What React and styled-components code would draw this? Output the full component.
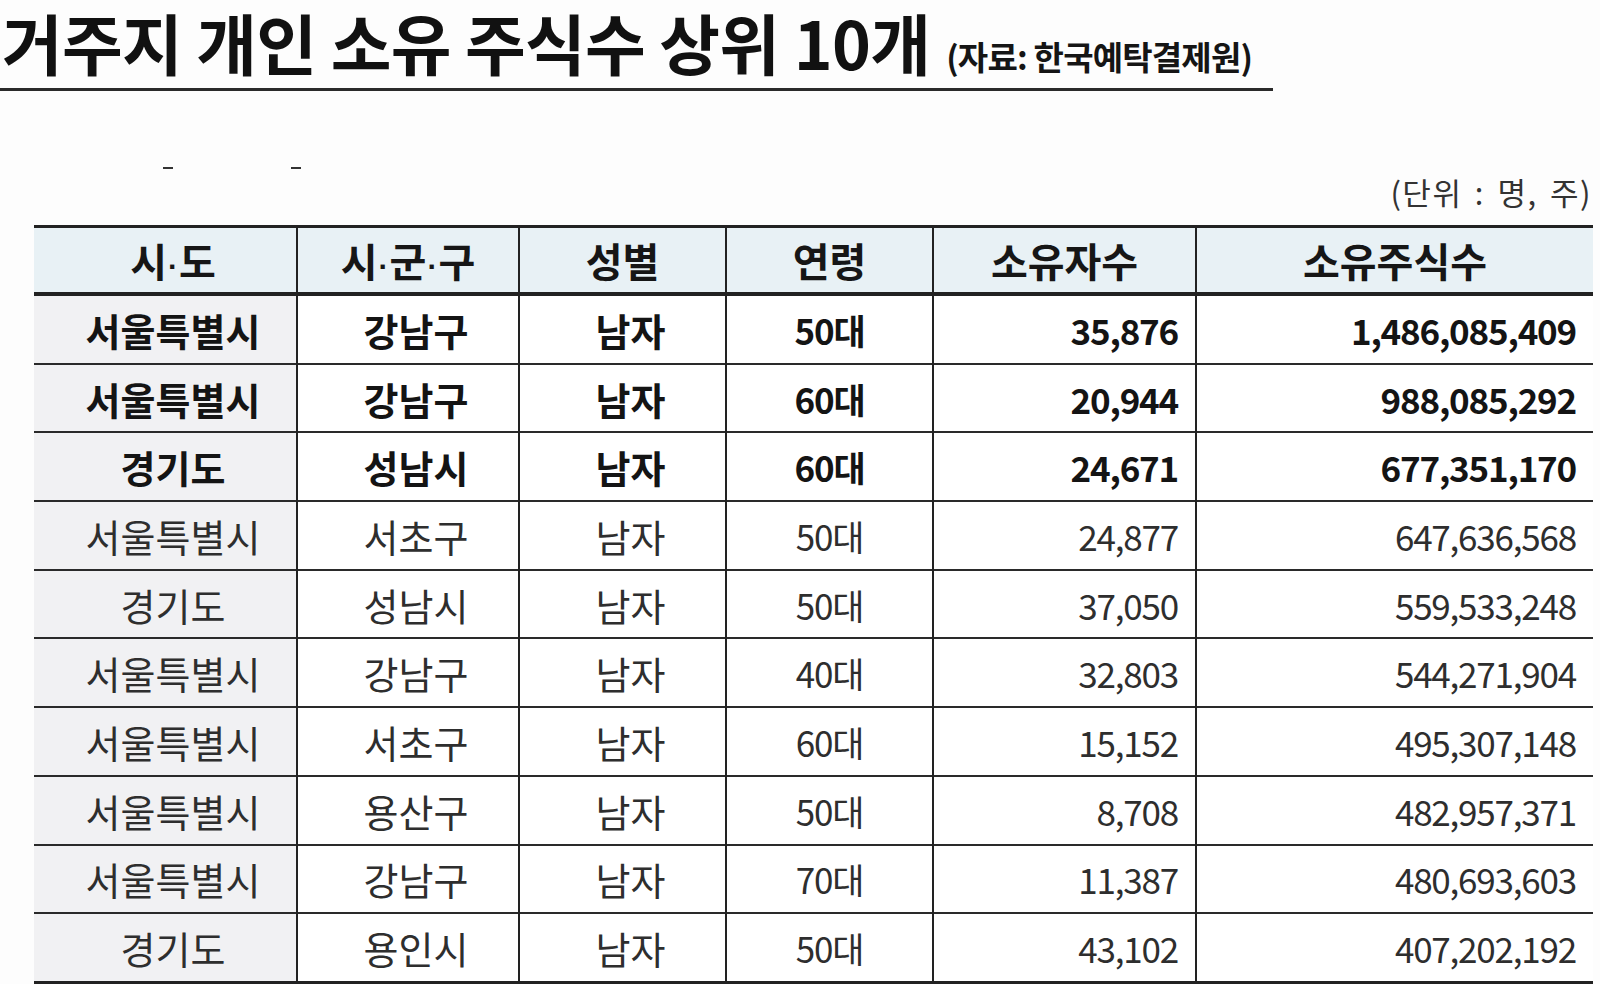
import React from 'react'
import styled, { createGlobalStyle } from 'styled-components'

const GlobalStyle = createGlobalStyle`
  html, body {
    margin: 0;
    padding: 0;
    background: #fdfdfd;
  }
  body {
    font-family: "Noto Sans CJK KR", "Noto Sans", sans-serif;
    color: #1b1b1b;
  }
`

const Page = styled.div`
  width: 1600px;
  height: 984px;
  overflow: hidden;
`

const TitleBar = styled.div`
  width: 1273px;
  height: 88px;
  border-bottom: 3px solid #2a2a2a;
  display: flex;
  align-items: flex-end;
`

const Title = styled.h1`
  margin: 0 0 7px 2px;
  font-size: 66px;
  font-weight: 700;
  letter-spacing: -0.7px;
  line-height: 80px;
  white-space: nowrap;
  color: #111;
`

const Source = styled.span`
  margin: 0 0 9px 16px;
  font-size: 33px;
  font-weight: 700;
  letter-spacing: -0.8px;
  line-height: 46px;
  white-space: nowrap;
  color: #151515;
`

const DashRow = styled.div`
  display: flex;
  gap: 118px;
  padding: 76px 0 0 163px;
`

const Dash = styled.span`
  width: 10px;
  height: 2px;
  background: #333;
`

const Unit = styled.div`
  text-align: right;
  padding-right: 8px;
  margin-top: 5px;
  font-size: 31px;
  font-weight: 400;
  line-height: 36px;
  color: #333;
  letter-spacing: 1.5px;
  word-spacing: 4px;
`

const Table = styled.table`
  margin: 15px 0 0 34px;
  width: 1559px;
  border-collapse: collapse;
  table-layout: fixed;
  border-top: 3px solid #222;
  border-bottom: 3px solid #222;
`

const HeadCell = styled.th`
  height: 64px;
  padding: ${p => (p.$first ? '0 0 0 16px' : '0')};
  background: #e8f1f5;
  font-size: 40px;
  font-weight: 700;
  color: #161616;
  border-bottom: 4px solid #222;
  border-left: 2px solid #222;
  &:first-child { border-left: none; }
`

const Dot = styled.span`
  font-family: "Liberation Sans", sans-serif;
  font-size: 30px;
  margin: 0 1px;
`

const Cell = styled.td`
  height: 66.7px;
  padding: ${p => (p.$num ? '0 17px 0 0' : p.$shift ? '0 0 0 16px' : '0')};
  text-align: ${p => (p.$num ? 'right' : 'center')};
  background: ${p => (p.$side ? '#f1f1f3' : '#ffffff')};
  font-size: ${p => (p.$narrow || p.$num ? '35px' : '38px')};
  font-weight: ${p => (p.$bold ? 700 : 400)};
  color: ${p => (p.$bold ? '#141414' : '#2e2e2e')};
  border-top: 2px solid #2a2a2a;
  border-left: 2px solid #222;
  letter-spacing: ${p => (p.$narrow || p.$num ? '-1.2px' : '0')};
  &:first-child { border-left: none; }
`

const widths = [263, 222, 207, 207, 263, 397]
const heads = [['시', '도'], ['시', '군', '구'], ['성별'], ['연령'], ['소유자수'], ['소유주식수']]

const rows = [
  ['서울특별시', '강남구', '남자', '50대', '35,876', '1,486,085,409'],
  ['서울특별시', '강남구', '남자', '60대', '20,944', '988,085,292'],
  ['경기도', '성남시', '남자', '60대', '24,671', '677,351,170'],
  ['서울특별시', '서초구', '남자', '50대', '24,877', '647,636,568'],
  ['경기도', '성남시', '남자', '50대', '37,050', '559,533,248'],
  ['서울특별시', '강남구', '남자', '40대', '32,803', '544,271,904'],
  ['서울특별시', '서초구', '남자', '60대', '15,152', '495,307,148'],
  ['서울특별시', '용산구', '남자', '50대', '8,708', '482,957,371'],
  ['서울특별시', '강남구', '남자', '70대', '11,387', '480,693,603'],
  ['경기도', '용인시', '남자', '50대', '43,102', '407,202,192'],
]

const App = () => {
  return (
    <Page>
      <GlobalStyle />
      <TitleBar>
        <Title>거주지 개인 소유 주식수 상위 10개</Title>
        <Source>(자료: 한국예탁결제원)</Source>
      </TitleBar>
      <DashRow>
        <Dash />
        <Dash />
      </DashRow>
      <Unit>(단위 : 명, 주)</Unit>
      <Table>
        <colgroup>
          {widths.map((w, i) => (
            <col key={i} style={{ width: w }} />
          ))}
        </colgroup>
        <thead>
          <tr>
            {heads.map((parts, i) => (
              <HeadCell key={i} $first={i === 0}>
                {parts.map((p, j) => (
                  <React.Fragment key={j}>
                    {j > 0 && <Dot>·</Dot>}
                    {p}
                  </React.Fragment>
                ))}
              </HeadCell>
            ))}
          </tr>
        </thead>
        <tbody>
          {rows.map((r, ri) => (
            <tr key={ri}>
              {r.map((v, ci) => (
                <Cell
                  key={ci}
                  $side={ci === 0}
                  $shift={ci < 3}
                  $narrow={ci === 3}
                  $num={ci >= 4}
                  $bold={ri < 3}
                >
                  {v}
                </Cell>
              ))}
            </tr>
          ))}
        </tbody>
      </Table>
    </Page>
  )
}

export default App
